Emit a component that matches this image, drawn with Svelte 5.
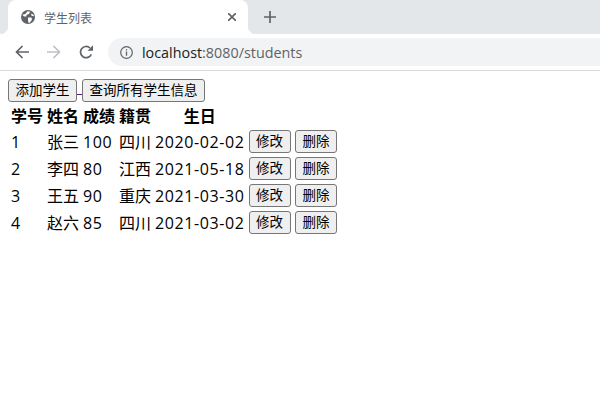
<script>
  let students = [
    { id: 1, name: '张三', score: 100, home: '四川', birthday: '2020-02-02' },
    { id: 2, name: '李四', score: 80, home: '江西', birthday: '2021-05-18' },
    { id: 3, name: '王五', score: 90, home: '重庆', birthday: '2021-03-30' },
    { id: 4, name: '赵六', score: 85, home: '四川', birthday: '2021-03-02' }
  ];
</script>

<div class="tabstrip">
  <div class="tab">
    <svg class="globe" width="14" height="14" viewBox="0 0 16 16">
      <circle cx="8" cy="8" r="8" fill="#5f6368" />
      <path d="M1.5 5.5 L5 4.5 L7.5 1.5 L10.5 2 L9 4.5 L6.5 5.5 L6 7.5 L3.5 7.5 Z M8 8.5 L12 8.5 L12.5 11 L10 14.5 L8.5 14.5 L8 11.5 Z M11.5 4 L14.5 5.5 L14.5 7 L12 6.5 Z" fill="#fff" />
    </svg>
    <span class="title">学生列表</span>
    <svg class="close" width="8" height="8" viewBox="0 0 8 8">
      <path d="M0 0 L8 8 M8 0 L0 8" stroke="#5f6368" stroke-width="1.6" />
    </svg>
  </div>
  <svg class="plus" width="12" height="12" viewBox="0 0 12 12">
    <path d="M6 0 V12 M0 6 H12" stroke="#5f6368" stroke-width="1.7" />
  </svg>
</div>

<div class="toolbar">
  <svg class="nav" width="14" height="14" viewBox="0 0 14 14">
    <path d="M14 7 H1.5 M7.5 1 L1.5 7 L7.5 13" fill="none" stroke="#5f6368" stroke-width="1.7" />
  </svg>
  <svg class="nav" width="14" height="14" viewBox="0 0 14 14">
    <path d="M0 7 H12.5 M6.5 1 L12.5 7 L6.5 13" fill="none" stroke="#bdc1c6" stroke-width="1.7" />
  </svg>
  <svg class="nav" width="14" height="14" viewBox="0 0 14 14">
    <path d="M12.3 9.3 A5.6 5.6 0 1 1 11 3" fill="none" stroke="#5f6368" stroke-width="1.7" />
    <path d="M8.5 5.8 H14 V0.3 Z" fill="#5f6368" />
  </svg>
  <div class="address">
    <svg width="13" height="13" viewBox="0 0 13 13">
      <circle cx="6.5" cy="6.5" r="5.8" fill="none" stroke="#5f6368" stroke-width="1.2" />
      <path d="M6.5 5.6 V9.8 M6.5 3.2 V4.6" stroke="#5f6368" stroke-width="1.3" />
    </svg>
    <span class="url"><span class="host">localhost</span>:8080/students</span>
  </div>
</div>

<main>
  <div class="actions">
    <a href="#add"><button>添加学生</button>{' '}</a>
    <a href="#list"><button>查询所有学生信息</button></a>
  </div>
  <table>
    <thead>
      <tr>
        <th>学号</th>
        <th>姓名</th>
        <th>成绩</th>
        <th>籍贯</th>
        <th>生日</th>
      </tr>
    </thead>
    <tbody>
      {#each students as s}
        <tr>
          <td class="num">{s.id}</td>
          <td>{s.name}</td>
          <td class="num">{s.score}</td>
          <td>{s.home}</td>
          <td class="num">{s.birthday}</td>
          <td class="btn-cell"><button>修改</button></td>
          <td class="btn-cell del"><button>删除</button></td>
        </tr>
      {/each}
    </tbody>
  </table>
</main>

<style>
  :global(body) {
    font-family: "Liberation Sans", "Noto Sans CJK SC", sans-serif;
    background: #fff;
    overflow: hidden;
  }

  .tabstrip {
    height: 34px;
    background: #e4e7ea;
    display: flex;
    align-items: flex-end;
    padding-left: 8px;
  }

  .tab {
    position: relative;
    width: 240px;
    height: 34px;
    box-sizing: border-box;
    background: #fff;
    border-radius: 8px 8px 0 0;
    display: flex;
    align-items: center;
    padding: 0 12px 0 13px;
  }

  .tab::before,
  .tab::after {
    content: "";
    position: absolute;
    bottom: 0;
    width: 8px;
    height: 8px;
  }

  .tab::before {
    left: -8px;
    background: radial-gradient(circle at 0 0, #e4e7ea 8px, #fff 8.5px);
  }

  .tab::after {
    right: -8px;
    background: radial-gradient(circle at 100% 0, #e4e7ea 8px, #fff 8.5px);
  }

  .title {
    margin-left: 9px;
    font-size: 12px;
    color: #5f6368;
    flex: 1;
  }

  .plus {
    margin: 0 0 11px 16px;
  }

  .toolbar {
    height: 36px;
    border-bottom: 1px solid #d9dadc;
    display: flex;
    align-items: center;
    padding-left: 15px;
  }

  .nav {
    margin-right: 18px;
  }

  .address {
    flex: 1;
    height: 28px;
    margin-left: -3px;
    background: #f1f3f4;
    border-radius: 14px 0 0 14px;
    display: flex;
    align-items: center;
    padding-left: 12px;
  }

  .url {
    margin-left: 9px;
    font-family: "Open Sans", sans-serif;
    font-size: 14.35px;
    color: #5f6368;
  }

  .host {
    color: #202124;
  }

  main {
    padding: 8px;
  }

  .actions {
    height: 24px;
  }

  a {
    color: #551a8b;
    word-spacing: 0.55px;
  }

  button {
    font-family: "Liberation Sans", "Noto Sans CJK SC", sans-serif;
    font-size: 13.5px;
    line-height: 15px;
    height: 23px;
    padding: 1px 6.5px;
    color: #000;
    background: #efefef;
    border: 1px solid #767676;
    border-radius: 3px;
    vertical-align: top;
  }

  table {
    font-size: 16px;
    border-spacing: 2px;
    color: #000;
  }

  th,
  td {
    padding: 1px;
    line-height: 21px;
    white-space: nowrap;
  }

  th {
    font-weight: bold;
  }

  td {
    text-align: left;
  }

  .num {
    font-family: "Open Sans", sans-serif;
    letter-spacing: 0.6px;
  }

  .btn-cell {
    padding: 0 1px 2px;
  }

  .del {
    padding-left: 1.5px;
  }
</style>
